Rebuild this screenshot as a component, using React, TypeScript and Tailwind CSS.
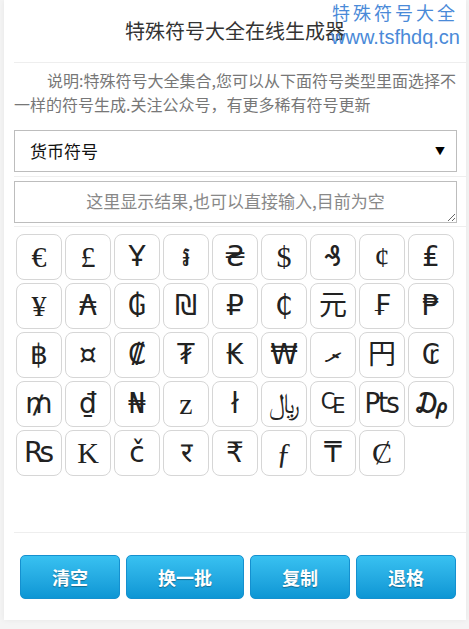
import React, { useState } from "react";

const SYMBOLS = [
  "€", "£", "Ұ", "៛", "₴", "$", "₰", "¢", "₤",
  "¥", "₳", "₲", "₪", "₽", "₵", "元", "₣", "₱",
  "฿", "¤", "₡", "₮", "₭", "₩", "ރ", "円", "₢",
  "₥", "₫", "₦", "z", "ł", "﷼", "₠", "₧", "₯",
  "₨", "K", "č", "र", "₹", "ƒ", "₸", "Ȼ",
];

// these render with a thin serif face in the picture
const SERIF = ["€", "£", "$", "¢", "¥", "z", "K", "ƒ", "Ȼ"];

const ACTIONS = ["清空", "换一批", "复制", "退格"];

export default function App() {
  const [text, setText] = useState("");

  return (
    <div className="min-h-screen bg-[#f4f4f4] pl-[4px] pr-[3px] font-['Noto_Sans_CJK_SC',sans-serif]">
      <div className="relative w-[462px] bg-white shadow-[0_0_6px_rgba(0,0,0,0.06)]">
        {/* watermark */}
        <div className="absolute right-[6px] top-0 flex flex-col items-end text-[20px] leading-[25px] text-[#4a8ad8]">
          <span className="text-[18px] tracking-[3px] mr-[2px]">特殊符号大全</span>
          <span className="font-['Liberation_Sans',sans-serif]">www.tsfhdq.cn</span>
        </div>

        <h1 className="h-[62px] flex items-center justify-center text-[20px] text-[#333]">
          特殊符号大全在线生成器
        </h1>

        <div className="ml-[10px] border-t border-[#eeeeee]">
          <p className="pt-[5px] text-[16px] leading-[24px] text-[#777] indent-[33px]">
            说明:特殊符号大全集合,您可以从下面符号类型里面选择不一样的符号生成.关注公众号，有更多稀有符号更新
          </p>

          <div className="pt-[14px] pb-[4px] border-b border-[#eeeeee]">
            <div className="relative w-[443px]">
              <select className="w-full h-[42px] appearance-none border border-[#bdbdbd] bg-white pl-[15px] text-[17px] text-[#111] outline-none">
                <option>货币符号</option>
              </select>
              <span className="absolute right-[12px] top-[13px] text-[10px] text-black pointer-events-none">▼</span>
            </div>
          </div>

          <div className="pt-[4px] pb-[3px] border-b border-[#eeeeee]">
            <textarea
              value={text}
              onChange={(e) => setText(e.target.value)}
              placeholder="这里显示结果,也可以直接输入,目前为空"
              className="block w-[443px] h-[42px] border border-[#bdbdbd] px-2 pt-[6px] text-center text-[17px] leading-[26px] placeholder:text-[#888] outline-none"
            />
          </div>

          <div className="h-[306px] border-b border-[#eeeeee] pt-[7px] pl-[2px]">
            <div className="grid grid-cols-[repeat(9,46px)] gap-[3px]">
              {SYMBOLS.map((s, i) => (
                <button
                  key={i}
                  onClick={() => setText(text + s)}
                  className={
                    SERIF.includes(s)
                      ? "h-[46px] flex items-center justify-center rounded-[8px] border border-[#d6d6d6] bg-white text-[30px] text-[#222] font-['Liberation_Serif',serif] leading-none"
                      : "h-[46px] flex items-center justify-center rounded-[8px] border border-[#d6d6d6] bg-white text-[28px] text-[#222] font-['DejaVu_Sans','Noto_Sans_CJK_SC',sans-serif] leading-none"
                  }
                >
                  {s}
                </button>
              ))}
            </div>
          </div>
        </div>

        <div className="flex gap-[6px] pl-[16px] pt-[22px] pb-[21px]">
          {ACTIONS.map((a) => (
            <button
              key={a}
              className="h-[44px] px-[31px] rounded-[5px] border border-[#1590cf] bg-gradient-to-b from-[#38c1f1] to-[#0c96d4] text-[18px] font-bold text-white [text-shadow:0_1px_1px_rgba(0,0,0,0.35)]"
            >
              {a}
            </button>
          ))}
        </div>
      </div>
    </div>
  );
}
